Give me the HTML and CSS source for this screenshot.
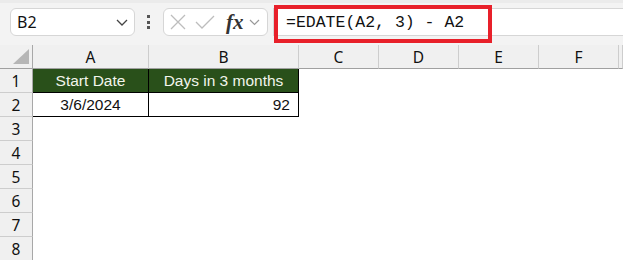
FILE: index.html
```html
<!DOCTYPE html>
<html lang="en">

<head>
    <meta charset="UTF-8">
    <title>EDATE - Days in 3 months</title>
    <link rel="stylesheet" href="styles.css">
</head>

<body>
    <div class="toolbar">
        <div class="name-box">
            <span>B2</span>
            <svg class="chevron" width="12" height="7" viewBox="0 0 12 7"><path d="M1 1 L6 6 L11 1" fill="none" stroke="#444" stroke-width="1.3"/></svg>
        </div>
        <div class="dots"><i></i><i></i><i></i></div>
        <div class="fx-box">
            <svg width="16" height="16" viewBox="0 0 16 16"><path d="M1 1 L15 15 M15 1 L1 15" stroke="#bdbdbd" stroke-width="1.3"/></svg>
            <svg width="20" height="16" viewBox="0 0 20 16"><path d="M1 8 L7 14 L19 2" fill="none" stroke="#bdbdbd" stroke-width="1.3"/></svg>
            <span class="fx">fx</span>
            <svg width="11" height="7" viewBox="0 0 11 7"><path d="M1 1 L5.5 5.5 L10 1" fill="none" stroke="#999" stroke-width="1.2"/></svg>
        </div>
        <div class="formula-bar">
            <span class="formula">=EDATE(A2, 3) - A2</span>
            <div class="highlight"></div>
        </div>
    </div>

    <div class="sheet">
        <div class="corner"><div class="triangle"></div></div>
        <div class="col-head">A</div>
        <div class="col-head">B</div>
        <div class="col-head">C</div>
        <div class="col-head">D</div>
        <div class="col-head">E</div>
        <div class="col-head">F</div>
        <div class="col-head"></div>

        <div class="row-head">1</div>
        <div class="cell head-cell">Start Date</div>
        <div class="cell head-cell">Days in 3 months</div>
        <div class="cell"></div><div class="cell"></div><div class="cell"></div><div class="cell"></div><div class="cell"></div>

        <div class="row-head">2</div>
        <div class="cell data-cell">3/6/2024</div>
        <div class="cell data-cell num">92</div>
        <div class="cell"></div><div class="cell"></div><div class="cell"></div><div class="cell"></div><div class="cell"></div>

        <div class="row-head">3</div>
        <div class="cell"></div><div class="cell"></div><div class="cell"></div><div class="cell"></div><div class="cell"></div><div class="cell"></div><div class="cell"></div>
        <div class="row-head">4</div>
        <div class="cell"></div><div class="cell"></div><div class="cell"></div><div class="cell"></div><div class="cell"></div><div class="cell"></div><div class="cell"></div>
        <div class="row-head">5</div>
        <div class="cell"></div><div class="cell"></div><div class="cell"></div><div class="cell"></div><div class="cell"></div><div class="cell"></div><div class="cell"></div>
        <div class="row-head">6</div>
        <div class="cell"></div><div class="cell"></div><div class="cell"></div><div class="cell"></div><div class="cell"></div><div class="cell"></div><div class="cell"></div>
        <div class="row-head">7</div>
        <div class="cell"></div><div class="cell"></div><div class="cell"></div><div class="cell"></div><div class="cell"></div><div class="cell"></div><div class="cell"></div>
        <div class="row-head">8</div>
        <div class="cell"></div><div class="cell"></div><div class="cell"></div><div class="cell"></div><div class="cell"></div><div class="cell"></div><div class="cell"></div>
    </div>
</body>

</html>
```

FILE: styles.css
```css
body {
    margin: 0;
    width: 623px;
    height: 260px;
    overflow: hidden;
    background-color: #fff;
    font-family: "Liberation Sans", Arial, sans-serif;
    color: #111;
}

.toolbar {
    height: 45px;
    border-top: 3px solid #ebebeb;
    background-color: #f3f3f3;
    display: flex;
    align-items: flex-start;
    padding-top: 5px;
    padding-left: 10px;
    box-sizing: border-box;
}

.name-box {
    width: 125px;
    height: 28px;
    box-sizing: border-box;
    background-color: #fff;
    border: 1px solid #d6d6d6;
    border-radius: 6px;
    display: flex;
    align-items: center;
    justify-content: space-between;
    padding: 0 6px 0 6px;
    font-family: "Noto Sans", "Liberation Sans", sans-serif;
    font-size: 16px;
}

.dots {
    width: 6px;
    margin: 0 12px 0 10px;
    height: 28px;
    display: flex;
    flex-direction: column;
    justify-content: center;
    align-items: center;
    gap: 2.5px;
}

.dots i {
    display: block;
    width: 3px;
    height: 3px;
    background-color: #555;
}

.fx-box {
    width: 105px;
    height: 28px;
    box-sizing: border-box;
    background-color: #fff;
    border: 1px solid #d6d6d6;
    border-radius: 6px;
    display: flex;
    align-items: center;
    padding-left: 6px;
    gap: 9px;
}

.fx-box .fx {
    font-family: "Liberation Serif", "DejaVu Serif", serif;
    font-style: italic;
    font-weight: bold;
    font-size: 21px;
    color: #333;
    margin-left: 2px;
    margin-right: -4px;
    line-height: 1;
}

.formula-bar {
    position: relative;
    flex: 1;
    margin-left: 5px;
    height: 28px;
    box-sizing: border-box;
    background-color: #fff;
    border: 1px solid #d6d6d6;
    border-right: none;
    display: flex;
    align-items: center;
    padding-left: 12px;
}

.formula {
    font-family: "Liberation Mono", "DejaVu Sans Mono", monospace;
    font-size: 16.5px;
    color: #111;
}

.highlight {
    position: absolute;
    left: 0;
    top: -4px;
    width: 218px;
    height: 38px;
    box-sizing: border-box;
    border: 4px solid #e8202a;
}

.sheet {
    display: grid;
    grid-template-columns: 33px 116px 150px 80px 80px 80px 80px 4px;
    grid-auto-rows: 24px;
    font-size: 15.5px;
}

.sheet > div {
    box-sizing: border-box;
}

.corner {
    background-color: #f0f0f0;
    border-right: 1px solid #a8a8a8;
    border-bottom: 1px solid #a0a0a0;
    display: flex;
    align-items: flex-end;
    justify-content: flex-end;
    padding: 0 3px 4px 0;
}

.triangle {
    width: 0;
    height: 0;
    border-left: 16px solid transparent;
    border-bottom: 15px solid #b6b6b6;
}

.col-head {
    background-color: #f0f0f0;
    border-right: 1px solid #cdcdcd;
    border-bottom: 1px solid #a0a0a0;
    display: flex;
    align-items: center;
    justify-content: center;
    font-family: "Noto Sans", "Liberation Sans", sans-serif;
}

.row-head {
    background-color: #f0f0f0;
    border-right: 1px solid #a8a8a8;
    border-bottom: 1px solid #cdcdcd;
    display: flex;
    align-items: center;
    justify-content: center;
    font-family: "Noto Sans", "Liberation Sans", sans-serif;
}

.cell {
    background-color: #fff;
    display: flex;
    align-items: center;
}

.head-cell {
    background-color: #29501a;
    color: #f2f5ec;
    justify-content: center;
    border-right: 1px solid #000;
    border-bottom: 1px solid #000;
}

.data-cell {
    justify-content: center;
    border-right: 1px solid #000;
    border-bottom: 1px solid #000;
}

.data-cell.num {
    justify-content: flex-end;
    padding-right: 8px;
}
```
